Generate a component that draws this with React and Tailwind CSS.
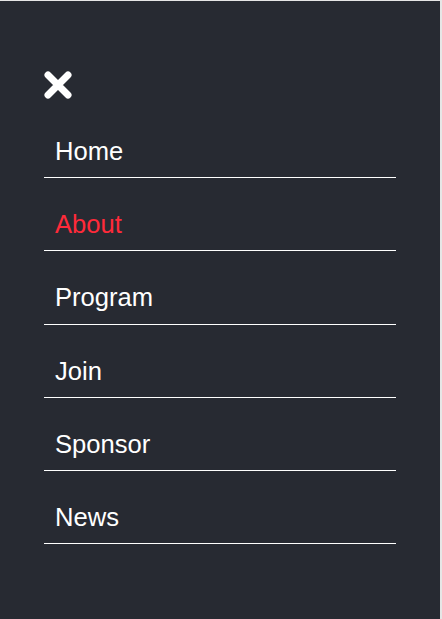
const items = ['Home', 'About', 'Program', 'Join', 'Sponsor', 'News'];

const CloseIcon = () => (
  <svg width="28" height="28" viewBox="0 0 28 28" className="block">
    <path d="M4 4 L24 24 M24 4 L4 24" stroke="#ffffff" strokeWidth="7" strokeLinecap="round" fill="none" />
  </svg>
);

const App = () => {
  return (
    <div className="w-[442px] h-[619px] bg-[#e6e6e6] pt-px pr-[2px]">
      <div className="h-[618px] bg-[#272a32] pl-[44px] pr-[44px] pt-[70px] font-['Liberation_Sans',Arial,sans-serif]">
        <button className="block w-[28px] h-[28px] p-0 m-0 bg-transparent border-0">
          <CloseIcon />
        </button>
        <nav className="mt-[6px]">
          <ul className="m-0 p-0 list-none">
            {items.map((label) => (
              <li key={label} className="border-b border-white h-[73.2px]">
                <a
                  href="#"
                  className={`block pl-[11px] pt-[27px] text-[25.6px] leading-[38px] no-underline ${label === 'About' ? 'text-[#ff2a3a]' : 'text-white'}`}
                >
                  {label}
                </a>
              </li>
            ))}
          </ul>
        </nav>
      </div>
    </div>
  );
};

export default App;
